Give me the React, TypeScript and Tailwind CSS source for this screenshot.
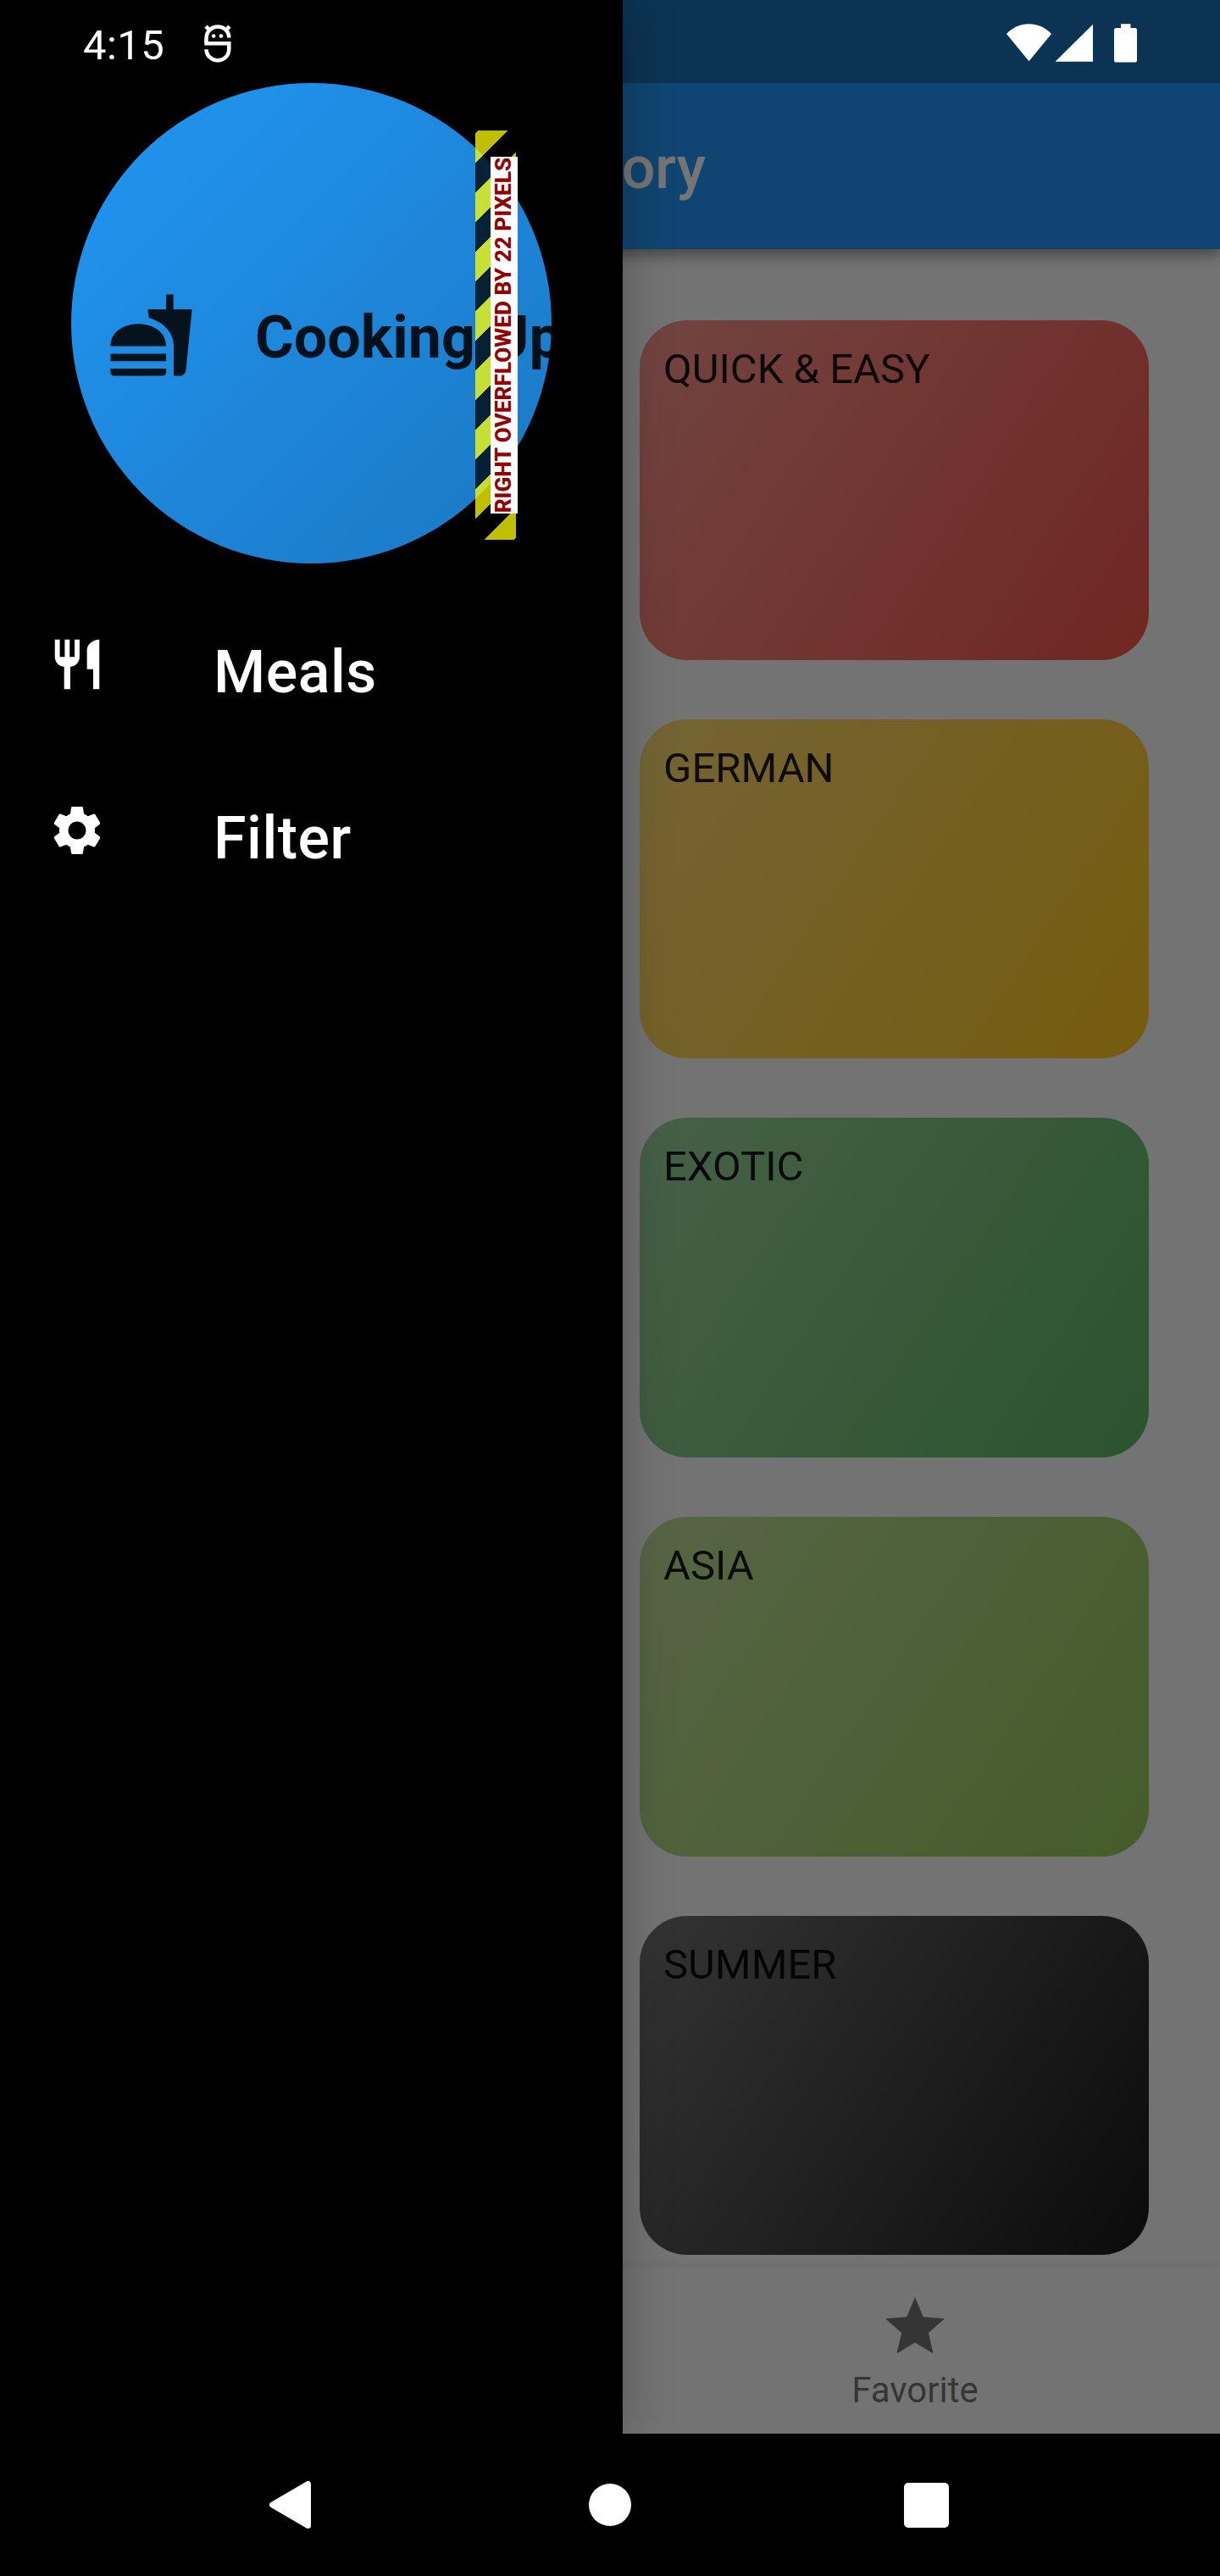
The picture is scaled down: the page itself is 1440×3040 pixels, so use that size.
import React from "react";

const meals = [
  { title: "QUICK & EASY", fill: "bg-[linear-gradient(123.7deg,#f443368c,#f44336e6)]" },
  { title: "GERMAN", fill: "bg-[linear-gradient(123.7deg,#ffc1078c,#ffc107e6)]" },
  { title: "EXOTIC", fill: "bg-[linear-gradient(123.7deg,#4caf508c,#4caf50e6)]" },
  { title: "ASIA", fill: "bg-[linear-gradient(123.7deg,#8bc34a8c,#8bc34ae6)]" },
  { title: "SUMMER", fill: "bg-[linear-gradient(123.7deg,#0000008c,#000000e6)]" },
];

type IconProps = { d: string; className: string };

function Icon({ d, className }: IconProps) {
  return (
    <svg viewBox="0 0 24 24" fill="currentColor" className={className}>
      <path d={d} />
    </svg>
  );
}

const FASTFOOD =
  "M18.06 22.99h1.66c.84 0 1.53-.64 1.63-1.46L23 5.05h-5V1h-1.97v4.05h-4.97l.3 2.34c1.71.47 3.31 1.32 4.27 2.26 1.44 1.42 2.43 2.89 2.43 5.29v8.05zM1 21.99V21h15.03v.99c0 .55-.45 1-1.01 1H2.01c-.56 0-1.01-.45-1.01-1zm15.03-7c0-8-15.03-8-15.03 0h15.03zM1.02 17h15v2h-15z";
const RESTAURANT =
  "M11 9H9V2H7v7H5V2H3v7c0 2.12 1.66 3.84 3.75 3.97V22h2.5v-9.03C11.34 12.84 13 11.12 13 9V2h-2v7zm5-3v8h2.5v8H21V2c-2.76 0-5 2.24-5 4z";
const SETTINGS =
  "M19.14 12.94c.04-.3.06-.61.06-.94 0-.32-.02-.64-.07-.94l2.03-1.58c.18-.14.23-.41.12-.61l-1.92-3.32c-.12-.22-.37-.29-.59-.22l-2.39.96c-.5-.38-1.03-.7-1.62-.94l-.36-2.54c-.04-.24-.24-.41-.48-.41h-3.84c-.24 0-.43.17-.47.41l-.36 2.54c-.59.24-1.13.57-1.62.94l-2.39-.96c-.22-.08-.47 0-.59.22L2.74 8.87c-.12.21-.08.47.12.61l2.03 1.58c-.05.3-.09.63-.09.94s.02.64.07.94l-2.03 1.58c-.18.14-.23.41-.12.61l1.92 3.32c.12.22.37.29.59.22l2.39-.96c.5.38 1.03.7 1.62.94l.36 2.54c.05.24.24.41.48.41h3.84c.24 0 .44-.17.47-.41l.36-2.54c.59-.24 1.13-.56 1.62-.94l2.39.96c.22.08.47 0 .59-.22l1.92-3.32c.12-.22.07-.47-.12-.61l-2.01-1.58zM12 15.6c-1.98 0-3.6-1.62-3.6-3.6s1.62-3.6 3.6-3.6 3.6 1.62 3.6 3.6-1.62 3.6-3.6 3.6z";
const STAR =
  "M12 17.27L18.18 21l-1.64-7.03L22 9.24l-7.19-.61L12 2 9.19 8.63 2 9.24l5.46 4.73L5.82 21z";

function StatusBar() {
  return (
    <div className="absolute inset-x-0 top-0 flex h-[98px] items-start pl-[98px] pr-[98px] text-white">
      <span className="mt-[25px] text-[49px] leading-[57px] tracking-[0.4px]">4:15</span>
      <svg viewBox="0 0 32 46" className="ml-auto mr-[915px] mt-[28px] h-[46px] w-[32px] shrink-0" fill="none" stroke="white" strokeWidth="4.5">
        <path d="M2.5 22V17.5C2.5 9 8.5 3.5 16 3.5S29.3 9 29.3 16.5" />
        <path d="M0.3 23.2H29.3V30C29.3 37.5 23.5 43.3 16 43.3S2.5 37.5 2.5 30.2" />
        <path d="M2 3.2L6.5 7.7M30 3.2L25.5 7.7" />
        <circle cx="11.2" cy="14.5" r="2.3" fill="white" stroke="none" />
        <circle cx="20" cy="14.5" r="2.3" fill="white" stroke="none" />
      </svg>
      <svg viewBox="0 0 154 46" className="mt-[28px] h-[46px] w-[154px] shrink-0" fill="white">
        <path d="M0 12C7 4.5 16.500 .3 26.500 .3S46 4.500 53 12L26.500 44.300Z" />
        <path d="M57.500 44.700L102 .7V44.700Z" />
        <path d="M135 .2H146.500V5H151.500Q154 5 154 7.500V43Q154 45.600 151.500 45.600H129.500Q127 45.600 127 43V7.500Q127 5 129.500 5H135Z" />
      </svg>
    </div>
  );
}

function MenuItem({ d, label }: { d: string; label: string }) {
  return (
    <div className="flex h-[196px] items-start pl-[56px] text-white">
      <Icon d={d} className="mt-[56px] size-[70px] shrink-0" />
      <span className="ml-[126px] mt-[59px] text-[70px] font-medium leading-[82px] tracking-[0.5px]">{label}</span>
    </div>
  );
}

function OverflowBanner() {
  return (
    <div className="absolute left-[476.7px] top-[56px] h-[483px] w-[48.3px] bg-[repeating-linear-gradient(135deg,#000000bf_0px,#000000bf_2.33px,#ffff00bf_2.33px,#ffff00bf_27.08px,#000000bf_27.08px,#000000bf_49.497px)]">
      <div className="absolute left-[18.6px] top-[31.3px] flex h-[420.4px] w-[31.5px] items-center justify-center bg-white">
        <span className="-rotate-90 whitespace-nowrap text-[26.25px] font-extrabold leading-[31px] text-[#900000]">
          RIGHT OVERFLOWED BY 22 PIXELS
        </span>
      </div>
    </div>
  );
}

function Drawer() {
  return (
    <aside className="absolute left-0 top-0 h-[2872px] w-[735px] bg-black px-0 pt-[98px] shadow-[0_0_56px_0_rgba(0,0,0,0.25)]">
      <div className="relative mx-[84px] flex h-[567px] items-center rounded-full bg-linear-to-br from-[#2196f3] to-[#2196f3cc] pl-[42px] pt-[28px] text-black/87">
        <Icon d={FASTFOOD} className="size-[105px] shrink-0" />
        <span className="ml-[70px] mt-[4px] whitespace-nowrap text-[70px] font-bold leading-[82px]">Cooking Up</span>
        <OverflowBanner />
      </div>
      <nav className="mt-[28px]">
        <MenuItem d={RESTAURANT} label="Meals" />
        <MenuItem d={SETTINGS} label="Filter" />
      </nav>
    </aside>
  );
}

function NavigationBar() {
  return (
    <div className="relative flex h-[168px] items-center bg-black">
      <svg viewBox="0 0 50 58" className="ml-[317px] h-[58px] w-[50px]" fill="white" stroke="white" strokeWidth="7" strokeLinejoin="round">
        <path d="M4.500 29L46.500 4.500V53.500Z" />
      </svg>
      <div className="ml-[328px] size-[50px] rounded-full bg-white" />
      <div className="ml-[321.500px] size-[53px] rounded-[5px] bg-white" />
    </div>
  );
}

export default function App() {
  return (
    <div className="relative h-[3040px] w-[1440px] overflow-hidden bg-black font-[Roboto,sans-serif]">
      <div className="relative flex h-[2872px] flex-col overflow-hidden bg-[#fafafa]">
        <header className="relative z-10 h-[294px] shrink-0 bg-[#2196f3] shadow-[0_7px_14px_rgba(0,0,0,0.3),0_3px_24px_rgba(0,0,0,0.14)]">
          <div className="h-[98px] bg-black/25" />
          <div className="flex h-[196px] w-[833px] items-center justify-end pt-[3px]">
            <span className="text-[70px] font-medium leading-[82px] text-white">Category</span>
          </div>
        </header>
        <main className="grid min-h-0 flex-1 grid-cols-2 content-start gap-[70px] px-[84px] pt-[84px]">
          {meals.map((m) => (
            <div key={m.title} className={`col-start-2 h-[400.66px] rounded-[56px] p-[28px] ${m.fill}`}>
              <span className="block text-[49px] leading-[59px] text-black/87">{m.title}</span>
            </div>
          ))}
        </main>
        <footer className="relative flex h-[196px] shrink-0 justify-end bg-[#fafafa] shadow-[0_-2px_10px_rgba(0,0,0,0.06)]">
          <div className="flex w-[720px] flex-col items-center pt-[28px] text-black/54">
            <Icon d={STAR} className="size-[84px]" />
            <span className="mt-[8px] text-[42px] leading-[49px]">Favorite</span>
          </div>
        </footer>
        <div className="absolute inset-0 z-20 bg-black/54" />
        <div className="absolute inset-0 z-30">
          <Drawer />
          <StatusBar />
        </div>
      </div>
      <NavigationBar />
    </div>
  );
}
